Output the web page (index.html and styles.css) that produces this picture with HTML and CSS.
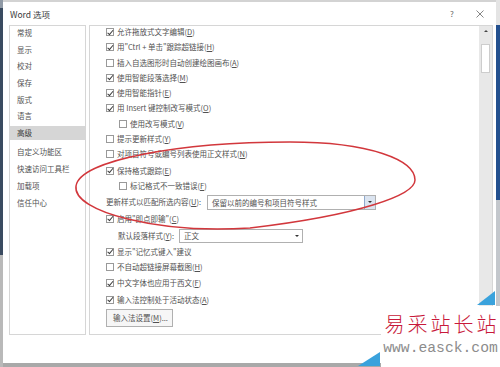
FILE: index.html
```html
<!DOCTYPE html>
<html lang="zh-CN">
<head>
<meta charset="utf-8">
<title>Word 选项</title>
<link rel="stylesheet" href="styles.css">
</head>
<body>
<div class="screen">
  <div class="edge-left"></div>
  <div class="dialog">
    <div class="titlebar">
      <span class="title">Word 选项</span>
      <span class="help">?</span>
      <span class="close">
        <svg width="8" height="8" viewBox="0 0 8 8"><path d="M0.5 0.5 L7.5 7.5 M7.5 0.5 L0.5 7.5" stroke="#666" stroke-width="0.8" fill="none"/></svg>
      </span>
    </div>
    <div class="body">
      <nav class="nav">
        <div class="nav-item">常规</div>
        <div class="nav-item">显示</div>
        <div class="nav-item">校对</div>
        <div class="nav-item">保存</div>
        <div class="nav-item">版式</div>
        <div class="nav-item">语言</div>
        <div class="nav-item active group-end">高级</div>
        <div class="nav-item">自定义功能区</div>
        <div class="nav-item group-end-2">快速访问工具栏</div>
        <div class="nav-item">加载项</div>
        <div class="nav-item">信任中心</div>
      </nav>
      <div class="main">
        <div class="content">
          <div class="list">
            <div class="row"><span class="cb on"></span><span class="txt">允许拖放式文字编辑(<u>D</u>)</span></div>
            <div class="row"><span class="cb on"></span><span class="txt">用"Ctrl + 单击"跟踪超链接(<u>H</u>)</span></div>
            <div class="row"><span class="cb"></span><span class="txt">插入自选图形时自动创建绘图画布(<u>A</u>)</span></div>
            <div class="row"><span class="cb on"></span><span class="txt">使用智能段落选择(<u>M</u>)</span></div>
            <div class="row"><span class="cb on"></span><span class="txt">使用智能指针(<u>E</u>)</span></div>
            <div class="row"><span class="cb on"></span><span class="txt">用 Insert 键控制改写模式(<u>O</u>)</span></div>
            <div class="row sub"><span class="cb"></span><span class="txt">使用改写模式(<u>V</u>)</span></div>
            <div class="row"><span class="cb"></span><span class="txt">提示更新样式(<u>Y</u>)</span></div>
            <div class="row"><span class="cb"></span><span class="txt">对项目符号或编号列表使用正文样式(<u>N</u>)</span></div>
            <div class="row gap-a"><span class="cb on"></span><span class="txt">保持格式跟踪(<u>E</u>)</span></div>
            <div class="row sub"><span class="cb"></span><span class="txt">标记格式不一致错误(<u>F</u>)</span></div>
            <div class="row row-select">
              <span class="label label-wide">更新样式以匹配所选内容(<u>U</u>):</span>
              <div class="select select-wide">
                <span class="select-text">保留以前的编号和项目符号样式</span>
                <span class="select-btn"><span class="tri-down"></span></span>
              </div>
            </div>
            <div class="row"><span class="cb on"></span><span class="txt">启用"即点即输"(<u>C</u>)</span></div>
            <div class="row row-select sub-label gap-b">
              <span class="label label-small">默认段落样式(<u>Y</u>):</span>
              <div class="select select-small">
                <span class="select-text">正文</span>
                <span class="select-plain"><span class="tri-down"></span></span>
              </div>
            </div>
            <div class="row"><span class="cb on"></span><span class="txt">显示"记忆式键入"建议</span></div>
            <div class="row"><span class="cb"></span><span class="txt">不自动超链接屏幕截图(<u>H</u>)</span></div>
            <div class="row gap-b"><span class="cb on"></span><span class="txt">中文字体也应用于西文(<u>F</u>)</span></div>
            <div class="row gap-b"><span class="cb on"></span><span class="txt">输入法控制处于活动状态(<u>A</u>)</span></div>
            <div class="btn">输入法设置(<u>M</u>)...</div>
          </div>
        </div>
        <div class="scrollbar">
          <div class="sb-up"><span class="tri-up"></span></div>
          <div class="sb-thumb"></div>
        </div>
      </div>
    </div>
    <div class="footer"></div>
  </div>
  <div class="edge-right"></div>

  <svg class="annotation" width="500" height="367" viewBox="0 0 500 367">
    <path d="M76 186 C80 160 180 142 290 142 C370 142 415 160 415 180 C415 195 360 215 250 228 C160 234 72 212 76 186 Z" fill="none" stroke="#d2373c" stroke-width="1.5"/>
  </svg>

  <div class="watermark">
    <svg class="wm-deco" width="142" height="76" viewBox="0 0 142 76">
      <polygon points="119,14 137,0 137,14" fill="#3aa2dc"/>
      <polygon points="0,75 22,61 22,75" fill="#3aa2dc"/>
    </svg>
    <div class="wm-cn">易采站长站</div>
    <div class="wm-url">www.easck.com</div>
  </div>
</div>
</body>
</html>
```

FILE: styles.css
```css
* {
  box-sizing: border-box;
}

html,
body {
  margin: 0;
  padding: 0;
}

body {
  width: 500px;
  height: 367px;
  overflow: hidden;
  font-family: "Noto Sans CJK SC", "Noto Sans", sans-serif;
  font-size: 7.5px;
  color: #515151;
}

u {
  text-decoration: underline;
  text-underline-offset: 1px;
  text-decoration-thickness: 0.5px;
}

.screen {
  position: relative;
  display: flex;
  width: 500px;
  height: 367px;
  background: linear-gradient(#d3d3d3 0 2px, #a9a9a9 2px);
}

.edge-left {
  width: 3px;
  background: linear-gradient(#8f99a5 0 8px, #3a4b60 8px 255px, #b9b9b9 255px);
}

.edge-right {
  width: 4px;
  background: linear-gradient(#e4e4e4 0 25px, #23508f 25px 200px, #c3c7cc 200px);
}

.dialog {
  width: 493px;
  height: 361px;
  margin-top: 2px;
  background: #fff;
  display: flex;
  flex-direction: column;
}

/* title bar */
.titlebar {
  height: 23px;
  display: flex;
  align-items: center;
  padding-left: 7px;
  padding-right: 11px;
}

.title {
  font-size: 8.5px;
  color: #3a3a3a;
}

.help {
  margin-left: auto;
  width: 10px;
  text-align: center;
  font-size: 8px;
  color: #666;
}

.close {
  width: 10px;
  margin-left: 18px;
  display: flex;
  justify-content: center;
  align-items: center;
}

/* body */
.body {
  display: flex;
  height: 310px;
  padding: 0 3px 0 6px;
  gap: 3px;
}

.nav {
  width: 77px;
  border: 1px solid #d6d6d6;
}

.nav-item {
  height: 14px;
  line-height: 14px;
  padding-left: 7px;
  margin-bottom: 2.7px;
  white-space: nowrap;
}

.nav-item.active {
  background: #d6d6d6;
  color: #3a3a3a;
}

.nav-item.group-end {
  margin-bottom: 5.2px;
}

.nav-item.group-end-2 {
  margin-bottom: 3.4px;
}

.main {
  flex: 1;
  display: flex;
  border: 1px solid #d6d6d6;
  overflow: hidden;
}

.content {
  flex: 1;
  padding-left: 16px;
  overflow: hidden;
}

.list {
  margin-top: -1.65px;
}

.row {
  display: flex;
  align-items: center;
  height: 15.3px;
  white-space: nowrap;
}

.row.sub {
  padding-left: 13px;
}

.row.sub-label {
  padding-left: 12px;
}

.row.gap-a {
  margin-top: 1.3px;
}

.row.gap-b {
  margin-top: 1px;
}

.row-select {
  height: 17px;
}

.cb {
  position: relative;
  width: 8px;
  height: 8px;
  border: 1px solid #999;
  background: #fff;
  margin-right: 3px;
  flex: none;
}

.cb.on::after {
  content: "";
  position: absolute;
  left: 2px;
  top: -0.5px;
  width: 2px;
  height: 4.5px;
  border: solid #3a3a3a;
  border-width: 0 1px 1px 0;
  transform: rotate(40deg);
}

.txt {
  line-height: 10px;
}

.label {
  flex: none;
  line-height: 10px;
}

.label-wide {
  width: 101px;
}

.label-small {
  width: 61px;
}

.select {
  display: flex;
  align-items: stretch;
  border: 1px solid #b0b0b0;
  background: #fff;
}

.select-wide {
  width: 169px;
  height: 15px;
}

.select-small {
  width: 124px;
  height: 14px;
}

.select-text {
  flex: 1;
  display: flex;
  align-items: center;
  padding-left: 4px;
}

.select-btn {
  width: 11px;
  background: #dbe4f0;
  border-left: 1px solid #8fa9cc;
  display: flex;
  align-items: center;
  justify-content: center;
}

.select-plain {
  width: 11px;
  display: flex;
  align-items: center;
  justify-content: center;
}

.tri-down {
  width: 0;
  height: 0;
  border-left: 2px solid transparent;
  border-right: 2px solid transparent;
  border-top: 2.5px solid #333;
}

.tri-up {
  width: 0;
  height: 0;
  border-left: 2px solid transparent;
  border-right: 2px solid transparent;
  border-bottom: 2.5px solid #444;
}

.btn {
  margin-top: 1.5px;
  width: 67px;
  height: 18px;
  border: 1px solid #b0b0b0;
  background: #f6f6f6;
  display: flex;
  align-items: center;
  padding-left: 6px;
  white-space: nowrap;
}

/* scrollbar */
.scrollbar {
  width: 13px;
  background: #e8e8e8;
  display: flex;
  flex-direction: column;
  align-items: center;
  padding-top: 1px;
}

.sb-up {
  width: 9px;
  height: 8px;
  display: flex;
  align-items: center;
  justify-content: center;
}

.sb-thumb {
  width: 9px;
  height: 29px;
  margin-top: 9px;
  background: #fff;
  border: 1px solid #cdcdcd;
}

.footer {
  flex: 1;
}

/* overlays */
.annotation {
  position: absolute;
  left: 0;
  top: 0;
  pointer-events: none;
}

.watermark {
  position: absolute;
  left: 381px;
  top: 306px;
  width: 119px;
  height: 61px;
  background: #fff;
  display: flex;
  flex-direction: column;
  align-items: center;
}

.wm-deco {
  position: absolute;
  left: -23px;
  top: -15px;
  overflow: visible;
}

.wm-cn {
  font-size: 20px;
  font-weight: 300;
  line-height: 24px;
  color: #c8193a;
  letter-spacing: 3px;
  padding-left: 3px;
  margin-top: 6px;
  white-space: nowrap;
}

.wm-url {
  font-family: "Liberation Mono", monospace;
  font-size: 14.7px;
  line-height: 15px;
  color: #8c8c8c;
  margin-top: 4.6px;
  white-space: nowrap;
}
```
